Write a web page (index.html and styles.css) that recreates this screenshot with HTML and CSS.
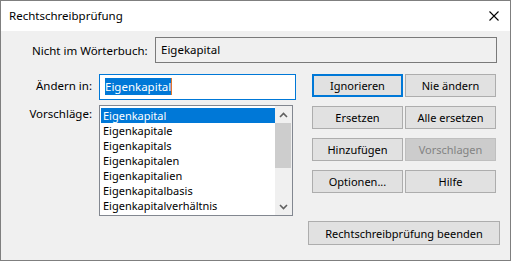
FILE: index.html
```html
<!DOCTYPE html>
<html lang="de">
<head>
    <meta charset="UTF-8">
    <title>Rechtschreibprüfung</title>
    <link rel="stylesheet" href="styles.css">
</head>
<body>
    <div class="window">
        <div class="titlebar">
            <span class="title">Rechtschreibprüfung</span>
            <svg class="close" width="10" height="10" viewBox="0 0 10 10">
                <path d="M0.5 0.5 L9.5 9.5 M9.5 0.5 L0.5 9.5" stroke="#000" stroke-width="1.1" fill="none"/>
            </svg>
        </div>

        <div class="content">
            <div class="row-top">
                <label class="top-label">Nicht im Wörterbuch:</label>
                <div class="word-box">Eigekapital</div>
            </div>

            <div class="main">
                <div class="fields">
                    <label class="field-label">Ändern in:</label>
                    <div class="change-input"><span class="sel">Eigenkapital</span><span class="caret"></span></div>

                    <label class="field-label list-label">Vorschläge:</label>
                    <div class="list">
                        <ul class="items">
                            <li class="active">Eigenkapital</li>
                            <li>Eigenkapitale</li>
                            <li>Eigenkapitals</li>
                            <li>Eigenkapitalen</li>
                            <li>Eigenkapitalien</li>
                            <li>Eigenkapitalbasis</li>
                            <li>Eigenkapitalverhältnis</li>
                        </ul>
                        <div class="scrollbar">
                            <div class="arrow">
                                <svg width="9" height="6" viewBox="0 0 9 6"><path d="M1 5 L4.5 1.5 L8 5" stroke="#606060" stroke-width="1.6" fill="none"/></svg>
                            </div>
                            <div class="track"><div class="thumb"></div></div>
                            <div class="arrow">
                                <svg width="9" height="6" viewBox="0 0 9 6"><path d="M1 1 L4.5 4.5 L8 1" stroke="#606060" stroke-width="1.6" fill="none"/></svg>
                            </div>
                        </div>
                    </div>
                </div>

                <div class="buttons">
                    <button class="btn default">Ignorieren</button>
                    <button class="btn">Nie ändern</button>
                    <button class="btn">Ersetzen</button>
                    <button class="btn">Alle ersetzen</button>
                    <button class="btn">Hinzufügen</button>
                    <button class="btn" disabled>Vorschlagen</button>
                    <button class="btn">Optionen...</button>
                    <button class="btn">Hilfe</button>
                </div>
            </div>

            <div class="footer">
                <button class="btn wide">Rechtschreibprüfung beenden</button>
            </div>
        </div>
    </div>
</body>
</html>
```

FILE: styles.css
```css
*{
    margin: 0;
    padding: 0;
    box-sizing: border-box;
}
body{
    font-family: "Noto Sans", "Segoe UI", sans-serif;
    font-size: 11.5px;
    color: #000;
    background: #f0f0f0;
}
.window{
    width: 511px;
    height: 261px;
    border: 1px solid #7f7f7f;
    background: #f0f0f0;
}
.titlebar{
    height: 30px;
    background: #fff;
    display: flex;
    align-items: center;
    justify-content: space-between;
    padding: 0 11px 1px 8px;
}
.title{
    font-size: 11.5px;
}
.content{
    padding-top: 6px;
}
.row-top{
    display: flex;
    align-items: center;
    height: 26px;
    margin-right: 13px;
}
.top-label{
    width: 154px;
    padding-left: 31px;
}
.word-box{
    flex: 1;
    height: 26px;
    border: 1px solid #7a7a7a;
    padding-left: 5px;
    line-height: 23px;
}
.main{
    display: flex;
    margin-top: 11px;
}
.fields{
    display: grid;
    grid-template-columns: 98px 197px;
    grid-template-rows: 26px 111px;
    row-gap: 5px;
}
.field-label{
    text-align: right;
    padding-right: 7px;
    line-height: 24px;
}
.list-label{
    line-height: 16px;
    padding-top: 1px;
}
.change-input{
    border: 1px solid #0078d7;
    background: #fff;
    padding: 3px 0 0 5px;
    display: flex;
    align-items: flex-start;
}
.sel{
    background: #0078d7;
    color: #fff;
    line-height: 17px;
    font-size: 11.5px;
}
.caret{
    width: 1px;
    height: 17px;
    background: #e0762a;
}
.list{
    width: 194px;
    border: 1px solid #828790;
    background: #fff;
    display: flex;
    padding: 2px 0 0 1px;
}
.items{
    list-style: none;
    flex: 1;
}
.items li{
    height: 15px;
    line-height: 15px;
    padding-left: 2px;
    white-space: nowrap;
    font-size: 11px;
}
.items li.active{
    background: #0078d7;
    color: #fff;
}
.scrollbar{
    width: 17px;
    margin-top: -2px;
    background: #f0f0f0;
    display: flex;
    flex-direction: column;
}
.arrow{
    height: 17px;
    display: flex;
    align-items: center;
    justify-content: center;
}
.track{
    flex: 1;
}
.thumb{
    height: 45px;
    margin-right: 1px;
    background: #cdcdcd;
}
.buttons{
    margin-left: 16px;
    display: grid;
    grid-template-columns: 91px 91px;
    grid-auto-rows: 23px;
    column-gap: 2px;
    row-gap: 9px;
}
.btn{
    font-family: inherit;
    font-size: 11px;
    color: #000;
    background: #e1e1e1;
    border: 1px solid #adadad;
}
.btn.default{
    border: 2px solid #0078d7;
}
.btn:disabled{
    background: #cccccc;
    border-color: #bfbfbf;
    color: #838383;
}
.footer{
    display: flex;
    justify-content: flex-end;
    margin-top: 5px;
    padding-right: 10px;
}
.btn.wide{
    width: 192px;
    height: 24px;
}
```
